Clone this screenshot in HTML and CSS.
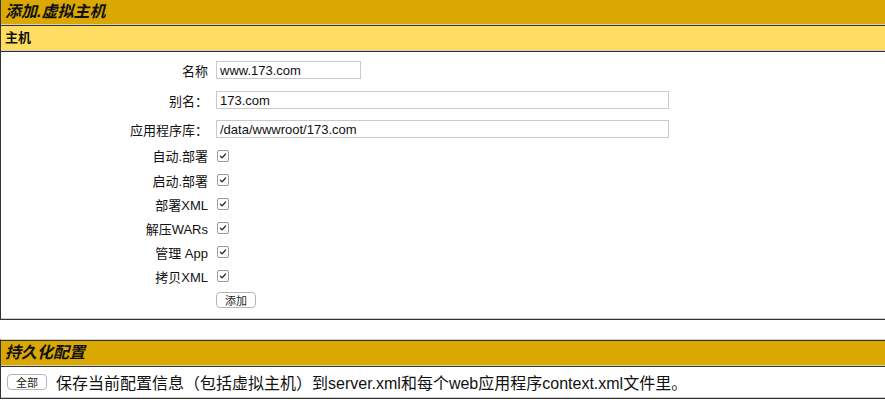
FILE: index.html
```html
<!DOCTYPE html>
<html lang="zh-CN">
<head>
<meta charset="utf-8">
<title>添加.虚拟主机</title>
<link rel="stylesheet" href="styles.css">
</head>
<body>
<div class="panel">
  <div class="title">添加.虚拟主机</div>
  <div class="subhead">主机</div>
  <div class="body">
    <form class="form">
      <label class="lbl">名称</label>
      <div class="fld"><input class="txt short" type="text" value="www.173.com"></div>
      <label class="lbl">别名：</label>
      <div class="fld"><input class="txt long" type="text" value="173.com"></div>
      <label class="lbl">应用程序库：</label>
      <div class="fld"><input class="txt long" type="text" value="/data/wwwroot/173.com"></div>
      <label class="lbl">自动.部署</label>
      <div class="fld"><span class="check"><svg viewBox="0 0 12 12" width="12" height="12"><path d="M3 6.3 L5 8.3 L9 3.6" fill="none" stroke="#222" stroke-width="1.5" stroke-linecap="round" stroke-linejoin="round"/></svg></span></div>
      <label class="lbl">启动.部署</label>
      <div class="fld"><span class="check"><svg viewBox="0 0 12 12" width="12" height="12"><path d="M3 6.3 L5 8.3 L9 3.6" fill="none" stroke="#222" stroke-width="1.5" stroke-linecap="round" stroke-linejoin="round"/></svg></span></div>
      <label class="lbl">部署XML</label>
      <div class="fld"><span class="check"><svg viewBox="0 0 12 12" width="12" height="12"><path d="M3 6.3 L5 8.3 L9 3.6" fill="none" stroke="#222" stroke-width="1.5" stroke-linecap="round" stroke-linejoin="round"/></svg></span></div>
      <label class="lbl">解压WARs</label>
      <div class="fld"><span class="check"><svg viewBox="0 0 12 12" width="12" height="12"><path d="M3 6.3 L5 8.3 L9 3.6" fill="none" stroke="#222" stroke-width="1.5" stroke-linecap="round" stroke-linejoin="round"/></svg></span></div>
      <label class="lbl">管理 App</label>
      <div class="fld"><span class="check"><svg viewBox="0 0 12 12" width="12" height="12"><path d="M3 6.3 L5 8.3 L9 3.6" fill="none" stroke="#222" stroke-width="1.5" stroke-linecap="round" stroke-linejoin="round"/></svg></span></div>
      <label class="lbl">拷贝XML</label>
      <div class="fld"><span class="check"><svg viewBox="0 0 12 12" width="12" height="12"><path d="M3 6.3 L5 8.3 L9 3.6" fill="none" stroke="#222" stroke-width="1.5" stroke-linecap="round" stroke-linejoin="round"/></svg></span></div>
      <span class="lbl"></span>
      <div class="fld"><button class="btn" type="button">添加</button></div>
    </form>
  </div>
</div>

<div class="panel panel2">
  <div class="title">持久化配置</div>
  <div class="row">
    <button class="btn btn-all" type="button">全部</button>
    <span class="desc">保存当前配置信息（包括虚拟主机）到server.xml和每个web应用程序context.xml文件里。</span>
  </div>
</div>
</body>
</html>
```

FILE: styles.css
```css
html, body {
  margin: 0;
  padding: 0;
  background: #ffffff;
  overflow: hidden;
}
body {
  font-family: "Liberation Sans", "Noto Sans CJK SC", sans-serif;
  color: #111;
}
.panel {
  border-top: 1px solid #d0d0d0;
  border-left: 1px solid #333;
  border-bottom: 1px solid #333;
}
.panel:first-child {
  border-top: none;
}
.title {
  height: 24px;
  line-height: 24px;
  padding-left: 4px;
  background: #daa800;
  font-size: 16px;
  font-weight: bold;
  font-style: italic;
  color: #111;
  border-bottom: 1px solid #d8d0b0;
}
.subhead {
  height: 24px;
  line-height: 24px;
  padding-left: 4px;
  background: #ffdd60;
  font-size: 13px;
  font-weight: bold;
  border-top: 1px solid #333;
  border-bottom: 1px solid #ccc;
}
.body {
  border-top: 1px solid #333;
  border-bottom: 1px solid #ccc;
  padding: 3px 0 6px 0;
}
.form {
  margin: 0;
  display: grid;
  grid-template-columns: 210px 1fr;
  grid-template-rows: 30px 30px 28px 25px 24px 24px 24px 24px 24px 24px;
  align-items: center;
}
.lbl {
  text-align: right;
  font-size: 13px;
  padding-right: 3px;
}
.fld {
  padding-left: 5px;
  display: flex;
  align-items: center;
}
.txt {
  box-sizing: border-box;
  height: 18px;
  border: 1px solid #c9c9c9;
  border-radius: 0;
  padding: 0 3px;
  margin: 0;
  font-family: "Liberation Sans", "Noto Sans CJK SC", sans-serif;
  font-size: 13px;
  color: #111;
  background: #fff;
  outline: none;
}
.short { width: 145px; }
.long { width: 453px; }
.check {
  box-sizing: border-box;
  width: 12px;
  height: 12px;
  margin-left: 1px;
  border: 1px solid #9a9a9a;
  border-radius: 2px;
  background: #fff;
  display: flex;
  align-items: center;
  justify-content: center;
}
.check svg {
  display: block;
  width: 10px;
  height: 10px;
}
.btn {
  box-sizing: border-box;
  height: 16px;
  padding: 0 8px;
  margin: 0;
  border: 1px solid #b5b5b5;
  border-radius: 4px;
  background: #fff;
  font-family: "Noto Sans CJK SC", sans-serif;
  font-size: 11px;
  line-height: 14px;
  color: #222;
}
.panel2 {
  margin-top: 19px;
}
.panel2 .title {
  border-top: 1px solid #333;
}
.row {
  height: 30px;
  display: flex;
  align-items: center;
  border-top: 1px solid #333;
  border-bottom: 1px solid #ccc;
}
.btn-all {
  margin-left: 6px;
}
.desc {
  margin-left: 9px;
  font-size: 16px;
  color: #111;
}
```
